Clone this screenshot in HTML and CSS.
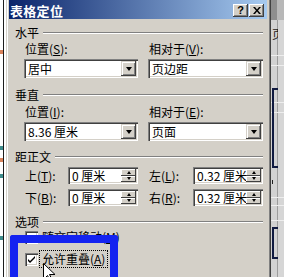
FILE: index.html
```html
<!DOCTYPE html>
<html lang="zh-CN">
<head>
<meta charset="utf-8">
<title>表格定位</title>
<link rel="stylesheet" href="styles.css">
</head>
<body>
<div class="screen">
  <div class="doc-left"></div>
  <div class="dialog">
    <div class="titlebar">
      <span class="title">表格定位</span>
      <div class="tbtns">
        <span class="tbtn help">?</span>
        <span class="tbtn close"><svg width="8" height="7" viewBox="0 0 8 7"><path d="M0 0h2l2 2.5L6 0h2L5 3.5 8 7H6L4 4.5 2 7H0l3-3.5z" fill="#000"/></svg></span>
      </div>
    </div>
    <div class="body">
      <div class="group-head g1"><span class="glabel">水平</span><i class="etch"></i></div>
      <div class="cols labels"><span class="lbl">位置(<u>S</u>):</span><span class="lbl">相对于(<u>V</u>):</span></div>
      <div class="cols combos">
        <div class="field combo"><span class="val">居中</span><span class="btn dd"><i class="tri-down"></i></span></div>
        <div class="field combo"><span class="val">页边距</span><span class="btn dd"><i class="tri-down"></i></span></div>
      </div>

      <div class="group-head g2"><span class="glabel">垂直</span><i class="etch"></i></div>
      <div class="cols labels"><span class="lbl">位置(<u>I</u>):</span><span class="lbl">相对于(<u>E</u>):</span></div>
      <div class="cols combos">
        <div class="field combo"><span class="val">8.36 厘米</span><span class="btn dd"><i class="tri-down"></i></span></div>
        <div class="field combo"><span class="val">页面</span><span class="btn dd"><i class="tri-down"></i></span></div>
      </div>

      <div class="group-head g3"><span class="glabel">距正文</span><i class="etch"></i></div>
      <div class="cols spinrow r1">
        <div class="pair"><span class="lbl sl">上(<u>T</u>):</span><div class="field spin"><span class="val">0 厘米</span><span class="spinbtns"><span class="btn sb"><i class="tri-up"></i></span><span class="btn sb"><i class="tri-down small"></i></span></span></div></div>
        <div class="pair"><span class="lbl sl">左(<u>L</u>):</span><div class="field spin"><span class="val">0.32 厘米</span><span class="spinbtns"><span class="btn sb"><i class="tri-up"></i></span><span class="btn sb"><i class="tri-down small"></i></span></span></div></div>
      </div>
      <div class="cols spinrow r2">
        <div class="pair"><span class="lbl sl">下(<u>B</u>):</span><div class="field spin"><span class="val">0 厘米</span><span class="spinbtns"><span class="btn sb"><i class="tri-up"></i></span><span class="btn sb"><i class="tri-down small"></i></span></span></div></div>
        <div class="pair"><span class="lbl sl">右(<u>R</u>):</span><div class="field spin"><span class="val">0.32 厘米</span><span class="spinbtns"><span class="btn sb"><i class="tri-up"></i></span><span class="btn sb"><i class="tri-down small"></i></span></span></div></div>
      </div>

      <div class="group-head g4"><span class="glabel">选项</span><i class="etch"></i></div>
      <div class="check c1"><span class="box"></span><span class="ctext">随文字移动(<u>M</u>)</span></div>
      <div class="check c2"><span class="box"><svg width="9" height="9" viewBox="0 0 9 9"><path d="M1 4l2 2 5-5v2L3 8 1 6z" fill="#000"/></svg></span><span class="ctext focus">允许重叠(<u>A</u>)</span></div>
    </div>
  </div>
  <div class="doc-right"><span class="doc-clip"><span class="doc-glyph">页</span></span></div>
</div>
<div class="highlight"></div>
<svg class="cursor" width="12" height="14" viewBox="0 0 12 14"><path d="M0.5 0.5v16l4-4 3 6 2-1-3-6h5.5z" fill="#fff" stroke="#000" stroke-width="1"/></svg>
</body>
</html>
```

FILE: styles.css
```css
* { box-sizing: border-box; margin: 0; padding: 0; }
html, body { width: 284px; height: 277px; overflow: hidden; }
body {
  background: #fff;
  font-family: "Noto Sans CJK SC", "Noto Sans", sans-serif;
  font-size: 12px;
  color: #000;
  position: relative;
}
u { text-decoration: underline; text-underline-offset: 1px; }

.screen { display: flex; height: 277px; }

.doc-left {
  width: 6px;
  background:
    linear-gradient(#d9825a, #d9825a) 0 50px / 3px 4px no-repeat,
    linear-gradient(#3f8c8c, #3f8c8c) 0 146px / 3px 4px no-repeat,
    linear-gradient(#d9825a, #d9825a) 0 158px / 3px 4px no-repeat,
    linear-gradient(#3f8c8c, #3f8c8c) 0 174px / 3px 4px no-repeat,
    linear-gradient(#3f8c8c, #3f8c8c) 0 236px / 3px 4px no-repeat,
    linear-gradient(to right, #fff 3px, #1c1c1c 3px, #1c1c1c 4px, #fff 4px);
}

.dialog {
  width: 265px;
  height: 277px;
  background: #d4d0c8;
  padding: 0 4px 0 3px;
  box-shadow: inset 1px 0 0 #d4d0c8, inset 2px 0 0 #fff, inset -1px 0 0 #404040, inset -2px 0 0 #808080;
}

.titlebar {
  height: 19px;
  padding: 2px 0 0 1px;
  display: flex;
  align-items: center;
  background: linear-gradient(to right, #0a246a, #a6caf0);
}
.title { color: #fff; font-weight: bold; font-size: 13px; line-height: 17px; letter-spacing: 0.3px; }
.tbtns { margin-left: auto; display: flex; gap: 1px; padding-right: 3px; }
.tbtn {
  width: 15px; height: 13px;
  background: #d4d0c8;
  box-shadow: inset -1px -1px 0 #404040, inset 1px 1px 0 #fff, inset -2px -2px 0 #808080;
  display: flex; align-items: center; justify-content: center;
  font-family: "Liberation Sans", sans-serif; font-weight: bold; font-size: 11px; line-height: 13px;
  padding-bottom: 1px;
}

.body { padding: 0 4px 0 6px; }

.group-head { height: 14px; display: flex; align-items: center; line-height: 14px; }
.g1 { margin-top: 7px; }
.g2 { margin-top: 10px; }
.g3 { margin-top: 9px; }
.g4 { margin-top: 9px; }
.etch {
  flex: 1; height: 2px; margin-left: 4px;
  border-top: 1px solid #808080; border-bottom: 1px solid #fff;
}

.cols { margin-left: 9px; display: grid; grid-template-columns: 114px 115px; column-gap: 10px; }
.labels { margin-top: 2px; height: 14px; line-height: 14px; }
.labels + .combos { margin-top: 3px; }
.g2 + .labels { margin-top: 3px; }
.lbl { padding-left: 1px; white-space: nowrap; }

.field {
  background: #fff;
  box-shadow: inset 1px 1px 0 #808080, inset 2px 2px 0 #404040, inset -1px -1px 0 #fff, inset -2px -2px 0 #d4d0c8;
  padding: 2px;
  display: flex;
  align-items: center;
}
.combo { height: 19px; }
.val { flex: 1; padding-left: 2px; line-height: 15px; white-space: nowrap; overflow: hidden; }
.btn {
  background: #d4d0c8;
  box-shadow: inset -1px -1px 0 #404040, inset 1px 1px 0 #d4d0c8, inset 2px 2px 0 #fff, inset -2px -2px 0 #808080;
  display: flex; align-items: center; justify-content: center;
}
.dd { width: 15px; height: 15px; }
.tri-down { width: 0; height: 0; border-left: 3.5px solid transparent; border-right: 3.5px solid transparent; border-top: 4px solid #000; }
.tri-down.small { border-left-width: 2.5px; border-right-width: 2.5px; border-top-width: 3px; }
.tri-up { width: 0; height: 0; border-left: 2.5px solid transparent; border-right: 2.5px solid transparent; border-bottom: 3px solid #000; }

.spinrow { height: 17px; }
.r1 { margin-top: 3px; }
.r2 { margin-top: 5px; }
.pair { display: flex; justify-content: space-between; align-items: center; }
.sl { line-height: 14px; }
.spin { width: 70px; height: 17px; }
.spinbtns { width: 15px; height: 13px; display: flex; flex-direction: column; }
.sb { flex: 1; box-shadow: inset -1px -1px 0 #404040, inset 1px 1px 0 #fff; }

.check { display: flex; align-items: center; height: 14px; margin-left: 10px; line-height: 14px; }
.c1 { margin-top: 1px; }
.c2 { margin-top: 8px; }
.box {
  width: 13px; height: 13px; background: #fff;
  box-shadow: inset 1px 1px 0 #808080, inset 2px 2px 0 #404040, inset -1px -1px 0 #fff, inset -2px -2px 0 #d4d0c8;
  display: flex; align-items: center; justify-content: center;
}
.ctext { margin-left: 3px; padding: 0 1px; white-space: nowrap; }
.focus { outline: 1px dotted #000; outline-offset: 1px; }

.doc-right {
  width: 13px;
  height: 277px;
  padding: 28px 0 0 1px;
  background:
    linear-gradient(#8e8e8e, #8e8e8e) 0 0 / 6px 20px no-repeat,
    linear-gradient(#b8b8b8, #b8b8b8) 6px 0 / 7px 20px no-repeat,
    linear-gradient(#101a40, #101a40) 1px 88px / 2px 80px no-repeat,
    linear-gradient(#101a40, #101a40) 1px 88px / 6px 2px no-repeat,
    linear-gradient(#101a40, #101a40) 1px 166px / 6px 2px no-repeat,
    linear-gradient(#101a40, #101a40) 1px 227px / 2px 32px no-repeat,
    linear-gradient(#101a40, #101a40) 1px 227px / 6px 2px no-repeat,
    linear-gradient(#101a40, #101a40) 1px 257px / 6px 2px no-repeat,
    linear-gradient(#202020, #202020) 1px 180px / 1px 4px no-repeat,
    linear-gradient(#eeeeee, #eeeeee) 0 55px / 13px 1px no-repeat,
    linear-gradient(#eeeeee, #eeeeee) 0 65px / 13px 1px no-repeat,
    linear-gradient(#eeeeee, #eeeeee) 0 102px / 13px 1px no-repeat,
    linear-gradient(#eeeeee, #eeeeee) 0 112px / 13px 1px no-repeat,
    linear-gradient(#eeeeee, #eeeeee) 0 197px / 13px 1px no-repeat,
    linear-gradient(#eeeeee, #eeeeee) 0 205px / 13px 1px no-repeat,
    linear-gradient(#eeeeee, #eeeeee) 0 220px / 13px 1px no-repeat,
    linear-gradient(to right, #d2d2d2 6px, #9c9c9c 6px, #9c9c9c 7px, #d6d6d6 7px);
}
.doc-clip { display: block; width: 6px; height: 12px; overflow: hidden; }
.doc-glyph { display: block; font-size: 12px; line-height: 12px; color: #222; }

.highlight {
  position: absolute;
  left: 10px; top: 235px;
  width: 108px; height: 42px;
  border: 8px solid #1423f0;
  border-bottom-width: 0;
  border-radius: 3px 3px 0 0;
}
.cursor { position: absolute; left: 43px; top: 263px; }
```
